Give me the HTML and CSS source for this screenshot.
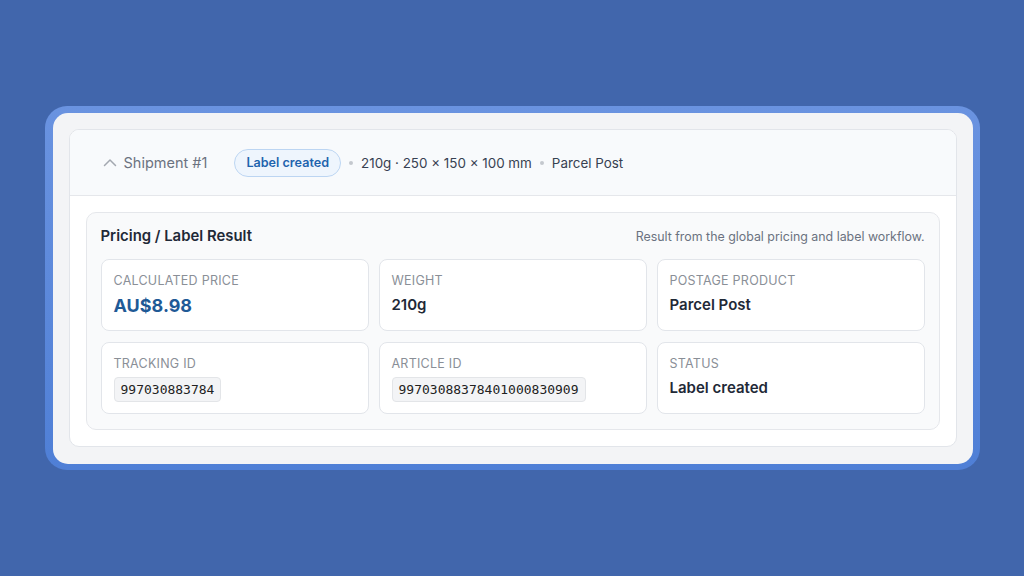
FILE: index.html
```html
<!DOCTYPE html>
<html lang="en">
<head>
  <meta charset="UTF-8">
  <title>Shipment #1</title>
  <link rel="stylesheet" href="styles.css">
</head>
<body>
  <div class="frame">
    <div class="panel">
      <div class="shipment">
        <div class="shipment-head">
          <svg class="chevron" width="14" height="14" viewBox="0 0 14 14">
            <path d="M1.5 9.5 L7 4 L12.5 9.5" fill="none" stroke="#a3a8b0" stroke-width="1.5" stroke-linecap="round" stroke-linejoin="round"/>
          </svg>
          <span class="shipment-title">Shipment #1</span>
          <span class="badge">Label created</span>
          <span class="dot"></span>
          <span class="meta">210g · 250 × 150 × 100 mm</span>
          <span class="dot"></span>
          <span class="meta">Parcel Post</span>
        </div>
        <div class="shipment-body">
          <div class="result">
            <div class="result-head">
              <h3>Pricing / Label Result</h3>
              <span class="note">Result from the global pricing and label workflow.</span>
            </div>
            <div class="grid">
              <div class="cell">
                <div class="label">Calculated price</div>
                <div class="value price">AU$8.98</div>
              </div>
              <div class="cell">
                <div class="label">Weight</div>
                <div class="value">210g</div>
              </div>
              <div class="cell">
                <div class="label">Postage product</div>
                <div class="value">Parcel Post</div>
              </div>
              <div class="cell">
                <div class="label">Tracking ID</div>
                <div><code>997030883784</code></div>
              </div>
              <div class="cell">
                <div class="label">Article ID</div>
                <div><code>99703088378401000830909</code></div>
              </div>
              <div class="cell">
                <div class="label">Status</div>
                <div class="value">Label created</div>
              </div>
            </div>
          </div>
        </div>
      </div>
    </div>
  </div>
</body>
</html>
```

FILE: styles.css
```css
body {
  background-color: #4166ac;
  font-family: Inter, "Noto Sans", sans-serif;
  display: flex;
  justify-content: center;
  align-items: center;
  height: 100vh;
  margin: 0;
}
.frame {
  width: 935px;
  box-sizing: border-box;
  padding: 7px 7px 6px 8px;
  border-radius: 22px;
  background: linear-gradient(180deg, #6a93e0, #4f7fd6);
}
.panel {
  background: #f3f4f6;
  border-radius: 15px;
  padding: 16px 16px 17px 16px;
}
.shipment {
  background: #fff;
  border: 1px solid #e2e5ea;
  border-radius: 10px;
  overflow: hidden;
}
.shipment-head {
  display: flex;
  align-items: center;
  height: 65px;
  padding: 0 33px;
  background: #f8fafc;
  border-bottom: 1px solid #e5e7eb;
  font-size: 14.5px;
}
.chevron {
  margin-right: 7px;
}
.shipment-title {
  color: #6b7280;
  margin-right: 27px;
}
.badge {
  display: inline-flex;
  align-items: center;
  height: 26px;
  padding: 0 11px;
  border: 1px solid #bcd5f2;
  border-radius: 14px;
  background: #eef5fd;
  color: #1f64ae;
  font-weight: 600;
  font-size: 12.6px;
}
.dot {
  width: 4px;
  height: 4px;
  border-radius: 50%;
  background: #c4c8ce;
  margin: 0 8px;
}
.meta {
  color: #374151;
  font-size: 13.4px;
}
.shipment-body {
  padding: 16px;
}
.result {
  background: #f9fafb;
  border: 1px solid #e5e7eb;
  border-radius: 10px;
  padding: 14px 14px 15px 14px;
}
.result-head {
  display: flex;
  justify-content: space-between;
  align-items: center;
  margin-bottom: 14px;
}
h3 {
  margin: 0;
  font-size: 14.9px;
  font-weight: 600;
  color: #1f2937;
}
.note {
  font-size: 12.4px;
  color: #6b7280;
}
.grid {
  display: grid;
  grid-template-columns: repeat(3, 1fr);
  gap: 11px 10px;
}
.cell {
  background: #fff;
  border: 1px solid #e2e5ea;
  border-radius: 8px;
  height: 72px;
  box-sizing: border-box;
  padding: 13px 12px 0 12px;
}
.label {
  font-size: 12.5px;
  text-transform: uppercase;
  color: #8a8f97;
  letter-spacing: 0.02em;
  margin-bottom: 7px;
}
.value {
  font-size: 15px;
  font-weight: 600;
  color: #1f2937;
}
.value.price {
  font-size: 18px;
  font-weight: 700;
  color: #1f5a96;
}
code {
  display: inline-block;
  font-family: "DejaVu Sans Mono", monospace;
  font-size: 13px;
  color: #222;
  background: #f3f4f6;
  border: 1px solid #e3e5e8;
  border-radius: 4px;
  padding: 4px 6px;
  margin-top: -3px;
}
```
